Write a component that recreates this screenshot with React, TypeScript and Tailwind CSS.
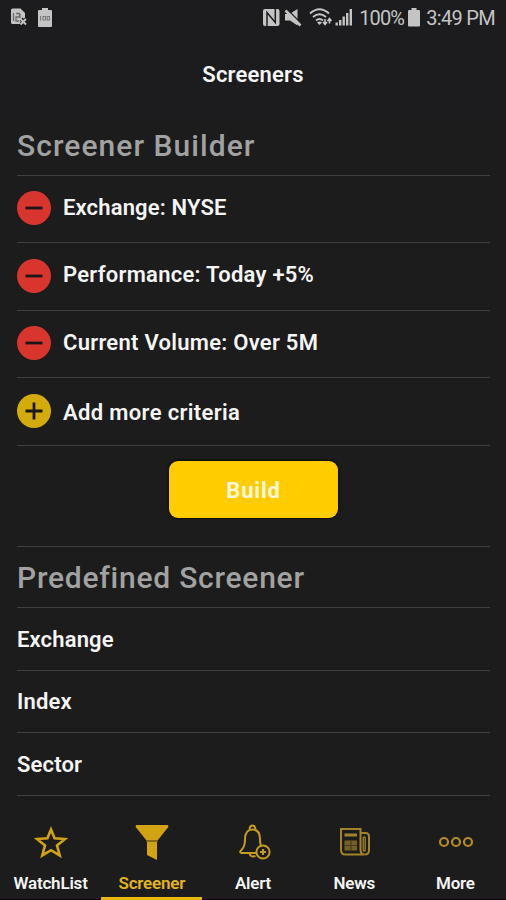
import React from 'react';

const criteria = [
  { label: 'Exchange: NYSE', row: 'h-[67px]', text: 'tracking-[0.150px]' },
  { label: 'Performance: Today +5%', row: 'h-[68px]', text: 'tracking-[0.270px]' },
  { label: 'Current Volume: Over 5M', row: 'h-[67px]', text: 'tracking-[0.270px]' },
];

const screeners = [
  { label: 'Exchange', row: 'h-[63px]' },
  { label: 'Index', row: 'h-[62px]' },
  { label: 'Sector', row: 'h-[63px]' },
];

const StatusBar = () => (
  <div className="flex h-9 items-center justify-between pl-[10px] pr-[11px] text-[#c4c4c4]">
    <div className="flex items-center gap-[10px]">
      {/* SIM missing */}
      <svg width="18" height="20" viewBox="0 0 18 20">
        <path d="M1 2q0-1.500 1.500-1.500h8L15 5v6l-4 2v3H2.500Q1 16 1 14.500z" fill="currentColor" />
        <path d="M3.500 5v8M6 5.500h3.500v3.500H6v4h3M10 6v4" stroke="#6a6a6c" strokeWidth="1.300" fill="none" />
        <path d="m11 11 5.500 5.500m0-5.500L11 16.500" stroke="#1c1c1e" strokeWidth="4" />
        <path d="m10.500 11 5.500 5.500m0-5.500-5.500 5.500" stroke="currentColor" strokeWidth="1.900" />
      </svg>
      <svg width="14" height="20" viewBox="0 0 14 20">
        <path d="M4 0h6v2h3q1 0 1 1v15q0 1-1 1H1q-1 0-1-1V3q0-1 1-1h3z" fill="currentColor" />
        <path d="M2.500 8v4.500M5 8.500h2.500v3.500H5zM9.200 8.500h2.300v3.500H9.200z" stroke="#7b7b7d" strokeWidth="1.100" fill="none" />
      </svg>
    </div>
    <div className="flex items-center">
      {/* NFC */}
      <svg width="18" height="20" viewBox="0 0 18 20" className="mr-[4px]">
        <path d="M3 1h12.500q2 0 2 2v13q0 2-2 2h-12.500q-2 0-2-2V3q0-2 2-2z" fill="currentColor" />
        <path d="M5 18.500V4.500L13.300 14.500V0.500" stroke="#1c1c1e" strokeWidth="1.500" fill="none" />
      </svg>
      {/* Muted speaker */}
      <svg width="18" height="20" viewBox="0 0 18 20" className="mr-[7px]">
        <path d="M1 6h4.500L13.500 1v16.500L6 12.500H1z" fill="currentColor" />
        <path d="M2.800 1 18 16.200" stroke="#1c1c1e" strokeWidth="1.400" />
        <path d="M1.500 2.500 16.500 17.500" stroke="currentColor" strokeWidth="2.600" />
      </svg>
      {/* Wifi */}
      <svg width="24" height="20" viewBox="0 0 24 20" fill="none" stroke="currentColor" strokeWidth="2" className="mr-[2px]">
        <path d="M1 5.500Q10.500-3 20 5.500" />
        <path d="M4 9q6.500-5.500 13 0" />
        <path d="M7 12.500q3.500-3 7 0" />
        <path d="m10.500 17-2.500-2.500q2.500-1.800 5 0z" fill="currentColor" stroke="none" />
        <path d="M16 11v5m-2-2 2 2.500 2-2.500M20.500 15.500v-5m-2 2.500 2-2.500 2 2.500" strokeWidth="1.600" />
      </svg>
      {/* Signal strength */}
      <svg width="18" height="20" viewBox="0 0 18 20" fill="currentColor" className="mr-[6px]">
        <path d="M0.500 14.500h2.400v3H0.500zM4 12h2.400v5.500H4zM7.500 8.500h2.400v9H7.500zM11 5h2.400v12.500H11zM14.600 1H17v16.500h-2.400z" />
      </svg>
      <span className="w-[45px] whitespace-nowrap text-[20px] leading-none tracking-[-0.900px]">100%</span>
      <svg width="12" height="20" viewBox="0 0 12 20" fill="currentColor" className="mr-[6px] ml-[4px]">
        <path d="M3.500 0h5v2H11q1 0 1 1v14.500q0 1-1 1H1q-1 0-1-1V3q0-1 1-1h2.500z" />
      </svg>
      <span className="whitespace-nowrap text-[20px] leading-none tracking-[-0.700px]">3:49 PM</span>
    </div>
  </div>
);

const CircleIcon = ({ plus = false }: { plus?: boolean }) => (
  <svg width="34" height="34" viewBox="0 0 34 34" className="mb-[2px] shrink-0">
    <circle cx="17" cy="17" r="17" fill={plus ? '#d3ab0b' : '#d9352f'} />
    <path d={plus ? 'M8.500 17h17M17 8.500v17' : 'M8.500 17h17'} stroke="#1b1718" strokeWidth="2.800" />
  </svg>
);

const NavItem = ({ label, active = false, children }: { label: string; active?: boolean; children: React.ReactNode }) => (
  <div className="flex flex-1 flex-col items-center">
    <div className="mt-[28px] flex h-9 items-center">{children}</div>
    <span
      className={
        active
          ? 'mt-[13px] text-[17px] leading-5 font-semibold tracking-[-0.200px] text-[#e3b51d]'
          : 'mt-[13px] text-[17px] leading-5 font-semibold tracking-[-0.200px] text-[#f4f4f4]'
      }
    >
      {label}
    </span>
    <div className={active ? 'mt-auto h-[3px] w-full bg-[#e8b710]' : 'mt-auto h-px w-full bg-[#0c0509]'} />
  </div>
);

const App = () => {
  return (
    <div className="flex h-[900px] w-[506px] flex-col overflow-hidden bg-[#1c1c1c] font-['Roboto',sans-serif] text-[#f5f5f5]">
      {/* Header */}
      <header className="h-[118px] bg-[#1c1c1e]">
        <StatusBar />
        <h1 className="mt-[25px] text-center text-[22px] leading-7 font-semibold tracking-[0.200px]">Screeners</h1>
      </header>

      {/* Screener Builder */}
      <section className="pr-4 pl-[17px]">
        <h2 className="flex h-[58px] items-center border-b border-[#404040] pb-[3px] text-[30px] font-medium tracking-[1.050px] text-[#a2a2a2]">
          Screener Builder
        </h2>
        {criteria.map((item) => (
          <div key={item.label} className={`flex items-center gap-3 border-b border-[#404040] ${item.row}`}>
            <CircleIcon />
            <span className={`pb-[4px] text-[22px] font-semibold whitespace-nowrap ${item.text}`}>{item.label}</span>
          </div>
        ))}
        <div className="flex h-[68px] items-center gap-3 border-b border-[#404040]">
          <CircleIcon plus />
          <span className="pt-[1px] text-[22px] font-semibold tracking-[0.350px]">Add more criteria</span>
        </div>
        <div className="flex h-[101px] justify-center border-b border-[#404040] pt-[15px]">
          <button className="h-[57px] w-[169px] rounded-[9px] bg-[#ffcc00] pt-[2px] text-[22px] font-bold tracking-[0.800px] text-[#fff8dc] shadow-[0_0_2px_1px_#0c0c0c]">
            Build
          </button>
        </div>
      </section>

      {/* Predefined Screener */}
      <section className="pr-4 pl-[17px]">
        <h2 className="flex h-[61px] items-center border-b border-[#404040] text-[30px] font-medium tracking-[0.750px] text-[#a2a2a2]">
          Predefined Screener
        </h2>
        {screeners.map((item) => (
          <div key={item.label} className={`flex items-center border-b border-[#404040] ${item.row}`}>
            <span className="text-[22px] font-semibold tracking-[0.150px]">{item.label}</span>
          </div>
        ))}
      </section>

      {/* Bottom navigation */}
      <nav className="flex flex-1">
        <NavItem label="WatchList">
          <svg width="34" height="34" viewBox="0 0 34 34" fill="none" stroke="#d2a413" strokeWidth="2.600">
            <path d="m17 4.500 3.600 8.700 10.400.8-8 6.400 2.700 10L17 25.200 8.300 30.400 11 20.400 3 14l10.400-.8z" />
          </svg>
        </NavItem>
        <NavItem label="Screener" active>
          <svg width="34" height="36" viewBox="0 0 34 36" fill="#d2a413">
            <path d="M1.500 1h31q1 0 .8 2L22.500 16.500h-11L.7 3q-.2-2 .8-2z" />
            <path d="M12 18h10v18l-10-5z" />
            <path d="M11.500 16.500h11V18h-11z" fill="#8f7212" />
          </svg>
        </NavItem>
        <NavItem label="Alert">
          <svg width="32" height="36" viewBox="0 0 32 36" fill="none" stroke="#c49c20" strokeWidth="2" className="ml-1">
            <path d="M17 29H2.500Q0 28.500 2 26.500 6 23 6 15.500 6 5.500 13.500 5.500T21 15.500q0 3.500.8 5.500" />
            <path d="M10.500 5q.5-3.500 3-3.500t3 3.500M10.500 29.500q1 4 6 2.500" />
            <circle cx="24" cy="28" r="6.600" />
            <path d="M24 25v6M21 28h6" />
          </svg>
        </NavItem>
        <NavItem label="News">
          <svg width="32" height="30" viewBox="0 0 32 30" fill="none" stroke="#a18429" strokeWidth="2" className="ml-px">
            <path d="M2 2h19.500v20.500q0 5 4 5H6.500Q2 27.500 2 23z" />
            <path d="M22 6h4.500q3.500 0 3.500 3.500v14q0 4-4.500 4" />
            <path d="M24.200 23V11q0-1 1-1t1 1v12q0 1-1 1t-1-1z" strokeWidth="1.300" />
            <path d="M5.500 8h12.500" strokeWidth="3" />
            <path d="M5.500 13.500h12.500v10h-12.500z" fill="#746025" stroke="none" />
            <path d="M5.500 18.500h12.500M12 13.500v10" stroke="#453a1d" strokeWidth="1.200" />
          </svg>
        </NavItem>
        <NavItem label="More">
          <svg width="36" height="12" viewBox="0 0 36 12" fill="none" stroke="#b58d1f" strokeWidth="2.200" className="ml-px">
            <circle cx="6" cy="6" r="4" />
            <circle cx="18" cy="6" r="4" />
            <circle cx="30" cy="6" r="4" />
          </svg>
        </NavItem>
      </nav>
    </div>
  );
};

export default App;
